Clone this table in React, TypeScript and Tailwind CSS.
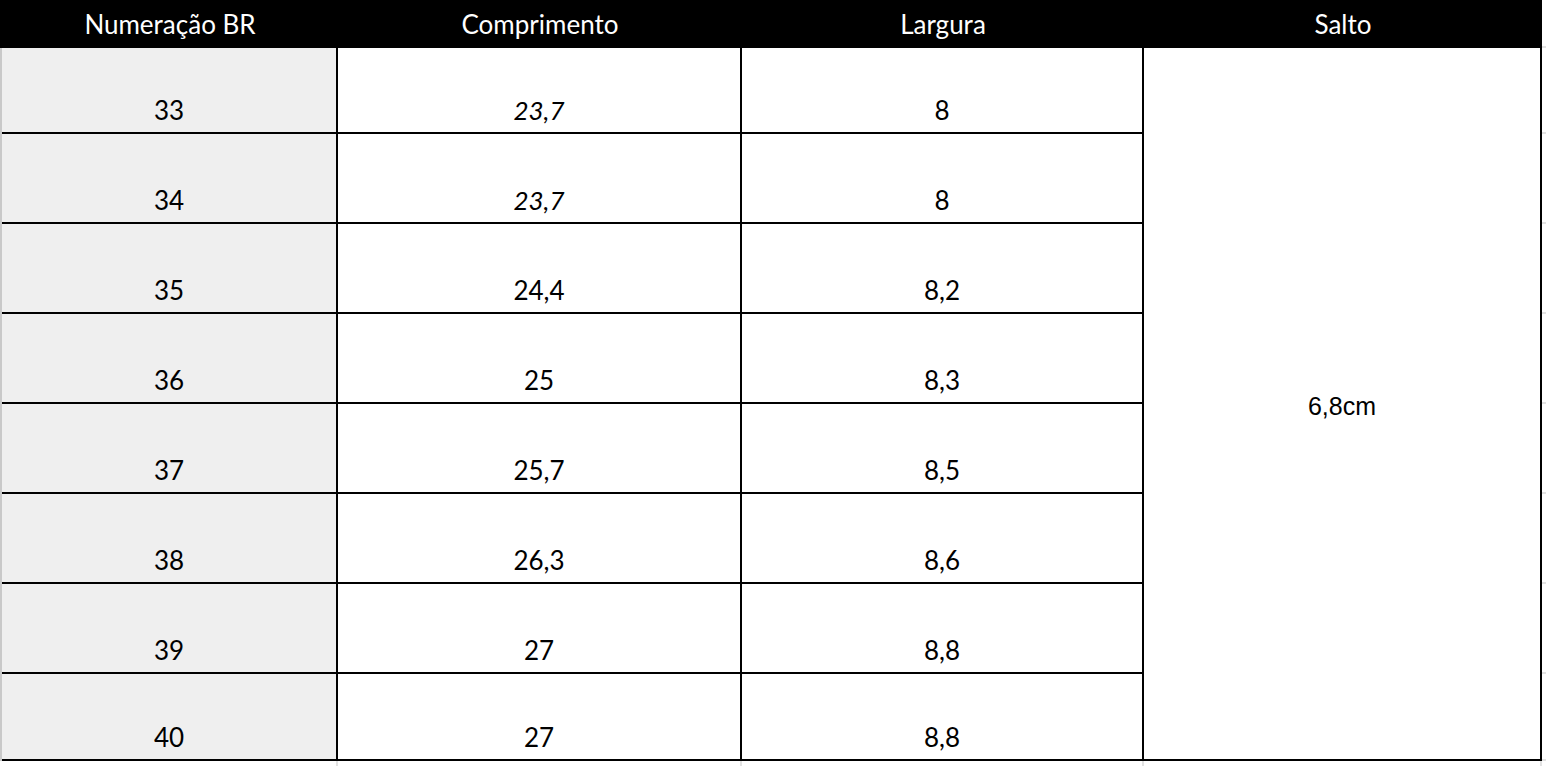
import React from "react";

const rows = [
  { n: "33", c: "23,7", l: "8", italic: true },
  { n: "34", c: "23,7", l: "8", italic: true },
  { n: "35", c: "24,4", l: "8,2" },
  { n: "36", c: "25", l: "8,3" },
  { n: "37", c: "25,7", l: "8,5" },
  { n: "38", c: "26,3", l: "8,6" },
  { n: "39", c: "27", l: "8,8" },
  { n: "40", c: "27", l: "8,8" },
];

const rowH = ["h-[86px]", "h-[90px]", "h-[90px]", "h-[90px]", "h-[90px]", "h-[90px]", "h-[90px]", "h-[87px]"];

export default function App() {
  return (
    <div
      className="w-[1546px] h-[766px] bg-white overflow-hidden text-black"
      style={{ fontFamily: "Lato, 'Open Sans', sans-serif" }}
    >
      {/* header */}
      <div className="flex h-[48px]">
        <div className="flex w-[1542px] bg-black text-white text-[26px] leading-[26px]">
          <div className="w-[338px] flex justify-center pt-[11px] pl-[2px]">Numeração BR</div>
          <div className="w-[404px] flex justify-center pt-[11px]">Comprimento</div>
          <div className="w-[402px] flex justify-center pt-[11px]">Largura</div>
          <div className="w-[398px] flex justify-center pt-[11px]">Salto</div>
        </div>
        <div className="w-[4px] flex flex-col justify-end">
          <div className="h-[2px] bg-[#e2e2e2]" />
        </div>
      </div>

      {/* body */}
      <div className="flex">
        <div className="w-[2px] h-[713px] bg-[#c9c9c9]" />
        <div className="flex flex-col">
          {rows.map((r, i) => (
            <div key={r.n} className={`flex ${rowH[i]}`}>
              <div className="w-[334px] bg-[#efefef] border-b-2 border-black flex items-end justify-center text-[26px] leading-[26px] pb-[9px]">
                {r.n}
              </div>
              <div
                className={`w-[404px] border-l-2 border-b-2 border-black flex items-end justify-center text-[26px] leading-[26px] pb-[9px] ${
                  r.italic ? "italic" : ""
                }`}
              >
                {r.c}
              </div>
              <div className="w-[402px] border-l-2 border-b-2 border-black flex items-end justify-center text-[26px] leading-[26px] pb-[9px]">
                {r.l}
              </div>
            </div>
          ))}
        </div>
        <div
          className="w-[400px] h-[713px] border-l-2 border-r-2 border-b-2 border-black flex items-center justify-center text-[25px] leading-[25px] pt-[5px]"
          style={{ fontFamily: "'Liberation Sans', Arial, sans-serif" }}
        >
          6,8cm
        </div>
        <div className="flex flex-col w-[4px]">
          {rows.map((r, i) => (
            <div key={r.n} className={`${rowH[i]} border-b-2 border-[#e2e2e2]`} />
          ))}
        </div>
      </div>

      {/* below table gridline stubs */}
      <div className="flex h-[5px]">
        <div className="w-[336px]" />
        <div className="w-[2px] bg-[#e2e2e2]" />
        <div className="w-[402px]" />
        <div className="w-[2px] bg-[#e2e2e2]" />
        <div className="w-[400px]" />
        <div className="w-[2px] bg-[#e2e2e2]" />
        <div className="w-[396px]" />
        <div className="w-[2px] bg-[#e2e2e2]" />
      </div>
    </div>
  );
}
